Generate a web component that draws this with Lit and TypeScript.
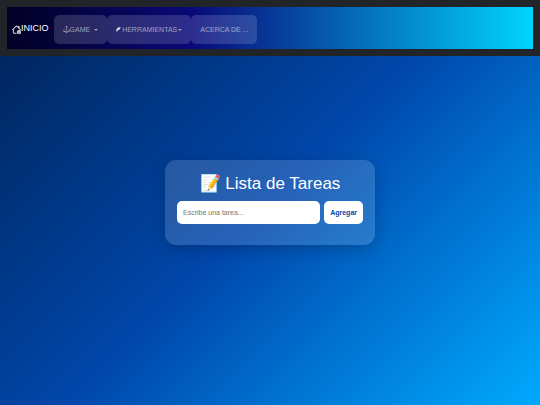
import { LitElement, html, css, svg } from "lit";
import { customElement, state } from "lit/decorators.js";

const houseGear = svg`
  <path d="M7.293 1.5a1 1 0 0 1 1.414 0L11 3.793V2.5a.5.5 0 0 1 .5-.5h1a.5.5 0 0 1 .5.5v3.293l2.354 2.353a.5.5 0 0 1-.708.708L8 2.207l-5 5V13.5a.5.5 0 0 0 .5.5h4a.5.5 0 0 1 0 1h-4A1.5 1.5 0 0 1 2 13.500V8.207l-.646.647a.5.5 0 1 1-.708-.708z" stroke="currentColor" stroke-width="0.5"/>
  <path d="M11.886 9.460c.18-.613 1.048-.613 1.229 0l.043.148a.64.64 0 0 0 .921.382l.136-.074c.561-.306 1.175.308.87.869l-.075.136a.64.64 0 0 0 .382.92l.149.045c.612.180.612 1.048 0 1.229l-.15.043a.64.64 0 0 0-.380.921l.074.136c.305.561-.309 1.175-.870.870l-.136-.075a.64.64 0 0 0-.920.382l-.045.149c-.180.612-1.048.612-1.229 0l-.043-.150a.64.64 0 0 0-.921-.380l-.136.074c-.561.305-1.175-.309-.870-.870l.075-.136a.64.64 0 0 0-.382-.920l-.148-.045c-.613-.180-.613-1.048 0-1.229l.148-.043a.64.64 0 0 0 .382-.921l-.074-.136c-.306-.561.308-1.175.869-.870l.136.075a.64.64 0 0 0 .920-.382zM14 12.500a1.500 1.500 0 1 0-3 0 1.500 1.500 0 0 0 3 0" fill-rule="evenodd" stroke="currentColor" stroke-width="0.8"/>`;

const joystick = svg`
  <path d="M10 2a2 2 0 0 1-1.500 1.937v5.087c.863.083 1.500.377 1.500.726 0 .414-.895.750-2 .750s-2-.336-2-.750c0-.350.637-.643 1.500-.726V3.937A2 2 0 1 1 10 2"/>
  <path d="M0 9.665v1.717a1 1 0 0 0 .553.894l6.553 3.277a2 2 0 0 0 1.788 0l6.553-3.277a1 1 0 0 0 .553-.894V9.665c0-.100-.060-.190-.152-.230L9.500 6.715v.993l5.227 2.178a.125.125 0 0 1 .001.230l-5.940 2.546a2 2 0 0 1-1.576 0l-5.940-2.546a.125.125 0 0 1 .001-.230L6.500 7.708l-.013-.988L.152 9.435a.250.250 0 0 0-.152.230"/>`;

const hammer = svg`
  <path d="M0 8.500 5.500 2.500C8 .8 11.500.6 16 2c-2 .6-3.200 1.600-3.600 3l.8 1.200-3.700 3.400-1.800-.6L5 13.500 1.800 14.500 0 12.500l2.500-3z"/>`;

@customElement("app-root")
export class AppRoot extends LitElement {
  static styles = css`
    :host {
      display: grid;
      grid-template: minmax(100vh, auto) / minmax(0, 1fr);
      background: linear-gradient(135deg, #002255, #0047ab, #00aaff);
      color: #fff;
      font-family: "Liberation Sans", Arial, sans-serif;
      font-size: 7px;
    }
    * {
      box-sizing: border-box;
    }
    header,
    main {
      grid-area: 1 / 1;
    }
    header {
      align-self: start;
      padding: 7px;
      background: #212529;
    }
    nav {
      display: flex;
      align-items: center;
      padding: 8px 5px 5px;
      background: linear-gradient(90deg, #020024 0%, #090979 35%, #00d4ff 100%);
    }
    a {
      color: inherit;
      text-decoration: none;
    }
    .icon {
      fill: currentColor;
      width: 7px;
      height: 7px;
      flex: none;
    }
    .brand {
      display: flex;
      align-items: center;
      margin-right: 5px;
      padding-bottom: 4px;
      font-size: 9px;
      line-height: 12px;
    }
    .brand .icon {
      width: 9px;
      height: 9px;
      align-self: end;
    }
    .menu {
      display: flex;
      margin: 0;
      padding: 0;
      list-style: none;
    }
    .item {
      display: flex;
      align-items: center;
      padding: 10px 9px;
      border: 0;
      border-radius: 5px;
      background: rgba(255, 255, 255, 0.15);
      color: rgba(255, 255, 255, 0.55);
      font: inherit;
      line-height: 9px;
      white-space: nowrap;
    }
    .caret {
      margin-left: 1px;
      border: 2px solid transparent;
      border-top-color: currentColor;
      border-bottom: 0;
    }
    .spaced {
      margin-right: 3px;
    }
    .hammer {
      width: 5px;
      height: 5px;
      margin-right: 1px;
      color: rgba(255, 255, 255, 0.8);
    }
    main {
      display: grid;
      place-items: center;
      padding: 64px 16px;
    }
    .card {
      width: 100%;
      max-width: 210px;
      padding: 14px 12px 21px;
      border-radius: 11px;
      background: rgba(255, 255, 255, 0.15);
      box-shadow: 0 4px 16px rgba(0, 0, 0, 0.2);
    }
    h1 {
      margin: 0 0 7px;
      font-size: 17px;
      font-weight: 400;
      line-height: 20px;
      text-align: center;
    }
    form {
      display: flex;
      gap: 4px;
    }
    input,
    .add {
      padding: 7px 6px;
      border: 0;
      border-radius: 5px;
      background: #fff;
      font: inherit;
      line-height: 9px;
    }
    input {
      flex: 1;
      min-width: 0;
      height: 23px;
    }
    input::placeholder {
      color: #757575;
    }
    .add {
      color: #0047ab;
      font-weight: 700;
    }
    .tasks {
      margin: 0;
      padding: 0;
      list-style: none;
    }
  `;

  @state() private tasks: string[] = [];

  private addTask(event: Event) {
    event.preventDefault();
    const field = this.renderRoot.querySelector("input")!;
    const text = field.value.trim();
    if (!text) return;
    this.tasks = [...this.tasks, text];
    field.value = "";
  }

  render() {
    return html`
      <header>
        <nav>
          <a class="brand" href="#">
            <svg class="icon" viewBox="0 0 16 16" aria-hidden="true">${houseGear}</svg>INICIO
          </a>
          <ul class="menu">
            <li>
              <button class="item" type="button">
                <svg class="icon" viewBox="0 0 16 16" aria-hidden="true">${joystick}</svg>
                <span class="spaced">GAME</span>
                <span class="caret"></span>
              </button>
            </li>
            <li>
              <button class="item" type="button">
                <svg class="icon hammer" viewBox="0 0 16 16" aria-hidden="true">${hammer}</svg>
                <span>HERRAMIENTAS</span>
                <span class="caret"></span>
              </button>
            </li>
            <li><a class="item" href="#">ACERCA DE ...</a></li>
          </ul>
        </nav>
      </header>
      <main>
        <section class="card">
          <h1>📝 Lista de Tareas</h1>
          <form @submit=${this.addTask}>
            <input type="text" placeholder="Escribe una tarea..." aria-label="Escribe una tarea" />
            <button class="add" type="submit">Agregar</button>
          </form>
          <ul class="tasks">
            ${this.tasks.map((task) => html`<li>${task}</li>`)}
          </ul>
        </section>
      </main>
    `;
  }
}
